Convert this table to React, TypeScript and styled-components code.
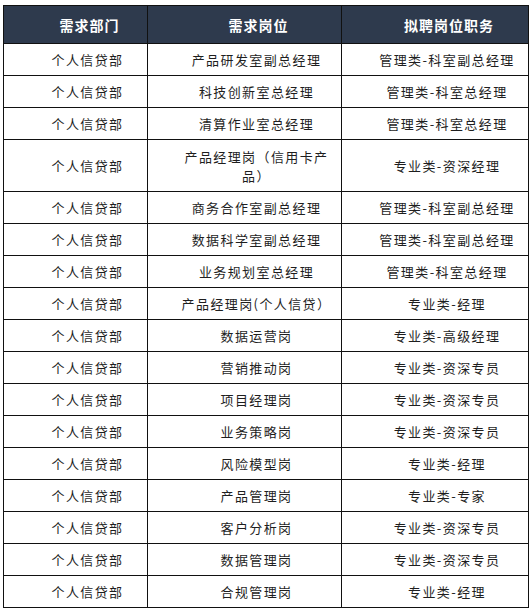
import styled, { createGlobalStyle } from 'styled-components'

const GlobalStyle = createGlobalStyle`
  body {
    margin: 0;
    background: #ffffff;
    font-family: "Noto Sans CJK SC", "Liberation Sans", sans-serif;
  }
`

const Sheet = styled.div`
  padding: 5px 0 0 3px;
`

const Table = styled.table`
  border-collapse: collapse;
  table-layout: fixed;
  width: 525px;
  border: 1px solid #111;
`

const HeadCell = styled.th<{ w: number }>`
  box-sizing: border-box;
  width: ${({ w }) => w}px;
  height: 38px;
  padding: 0 0 0 28px;
  background: #2e3a4d;
  color: #ffffff;
  font-size: 14px;
  font-weight: 700;
  letter-spacing: 1px;
  text-align: center;
  border: 1px solid #111;
`

const Row = styled.tr<{ tall?: boolean }>`
  height: ${({ tall }) => (tall ? 52 : 32)}px;
`

const Cell = styled.td`
  box-sizing: border-box;
  padding: 0 4px 0 28px;
  color: #1e1e1e;
  font-size: 13px;
  line-height: 19px;
  letter-spacing: 1.4px;
  text-align: center;
  vertical-align: middle;
  border: 1px solid #111;
`

const rows = [
  ['产品研发室副总经理', '管理类-科室副总经理'],
  ['科技创新室总经理', '管理类-科室总经理'],
  ['清算作业室总经理', '管理类-科室总经理'],
  ['产品经理岗（信用卡产品）', '专业类-资深经理'],
  ['商务合作室副总经理', '管理类-科室副总经理'],
  ['数据科学室副总经理', '管理类-科室副总经理'],
  ['业务规划室总经理', '管理类-科室总经理'],
  ['产品经理岗(个人信贷）', '专业类-经理'],
  ['数据运营岗', '专业类-高级经理'],
  ['营销推动岗', '专业类-资深专员'],
  ['项目经理岗', '专业类-资深专员'],
  ['业务策略岗', '专业类-资深专员'],
  ['风险模型岗', '专业类-经理'],
  ['产品管理岗', '专业类-专家'],
  ['客户分析岗', '专业类-资深专员'],
  ['数据管理岗', '专业类-资深专员'],
  ['合规管理岗', '专业类-经理'],
]

const App = () => {
  return (
    <Sheet>
      <GlobalStyle />
      <Table>
        <thead>
          <tr>
            <HeadCell w={144}>需求部门</HeadCell>
            <HeadCell w={194}>需求岗位</HeadCell>
            <HeadCell w={187}>拟聘岗位职务</HeadCell>
          </tr>
        </thead>
        <tbody>
          {rows.map(([post, title], i) => (
            <Row key={i} tall={post.length > 11}>
              <Cell>个人信贷部</Cell>
              <Cell>{post}</Cell>
              <Cell>{title}</Cell>
            </Row>
          ))}
        </tbody>
      </Table>
    </Sheet>
  )
}

export default App
